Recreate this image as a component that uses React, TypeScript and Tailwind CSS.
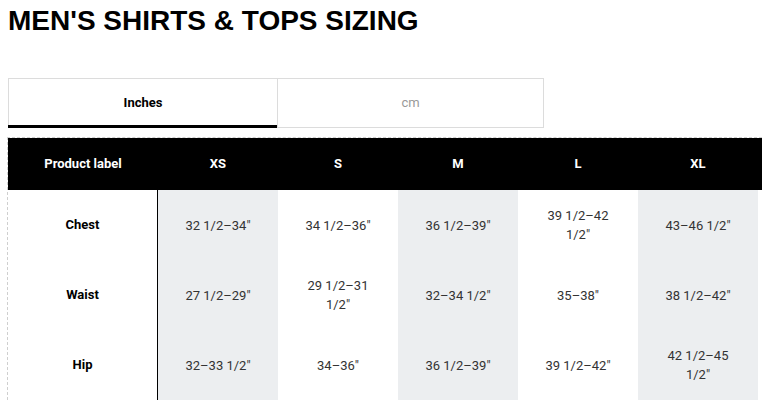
const sizes = ['XS', 'S', 'M', 'L', 'XL'];

const rows = [
  { label: 'Chest', values: ['32 1/2–34"', '34 1/2–36"', '36 1/2–39"', '39 1/2–42 1/2"', '43–46 1/2"'] },
  { label: 'Waist', values: ['27 1/2–29"', '29 1/2–31 1/2"', '32–34 1/2"', '35–38"', '38 1/2–42"'] },
  { label: 'Hip', values: ['32–33 1/2"', '34–36"', '36 1/2–39"', '39 1/2–42"', '42 1/2–45 1/2"'] },
];

const SizeCell = ({ value, shaded }: { value: string; shaded: boolean }) => (
  <div
    className={`w-[120px] shrink-0 flex items-center justify-center px-5 text-center text-[13px] leading-[19px] text-[#333] ${
      shaded ? 'bg-[#eceef0]' : 'bg-white'
    }`}
  >
    {value}
  </div>
);

export default function App() {
  return (
    <div className="w-[762px] h-[401px] overflow-hidden bg-white font-['Roboto',sans-serif] text-black">
      <h1 className="pl-2 pt-[7px] text-[28px] leading-[28px] font-bold font-['Liberation_Sans',Arial,sans-serif]">
        MEN'S SHIRTS &amp; TOPS SIZING
      </h1>

      {/* unit switch */}
      <div className="ml-2 mt-[43px] flex w-[536px] h-[50px] border border-[#dcdcdc]">
        <button className="relative w-[268px] h-full text-[13px] font-bold text-black">
          Inches
          <span className="absolute left-[-1px] right-0 bottom-[-1px] h-[3px] bg-black" />
        </button>
        <button className="flex-1 h-full border-l border-[#dcdcdc] text-[13px] text-[#999]">cm</button>
      </div>

      {/* size table */}
      <div className="ml-[7px] mt-[9px] border-l border-t border-dashed border-[#cfcfcf] w-[755px]">
        <div className="flex h-[52px] bg-black text-white text-[13px] font-bold">
          <div className="w-[150px] shrink-0 flex items-center justify-center">Product label</div>
          {sizes.map((s) => (
            <div key={s} className="w-[120px] shrink-0 flex items-center justify-center">
              {s}
            </div>
          ))}
        </div>
        {rows.map((row) => (
          <div key={row.label} className="flex h-[70px]">
            <div className="w-[150px] shrink-0 border-r border-black flex items-center justify-center text-[13px] font-bold">
              {row.label}
            </div>
            {row.values.map((v, i) => (
              <SizeCell key={i} value={v} shaded={i % 2 === 0} />
            ))}
          </div>
        ))}
      </div>
    </div>
  );
}
